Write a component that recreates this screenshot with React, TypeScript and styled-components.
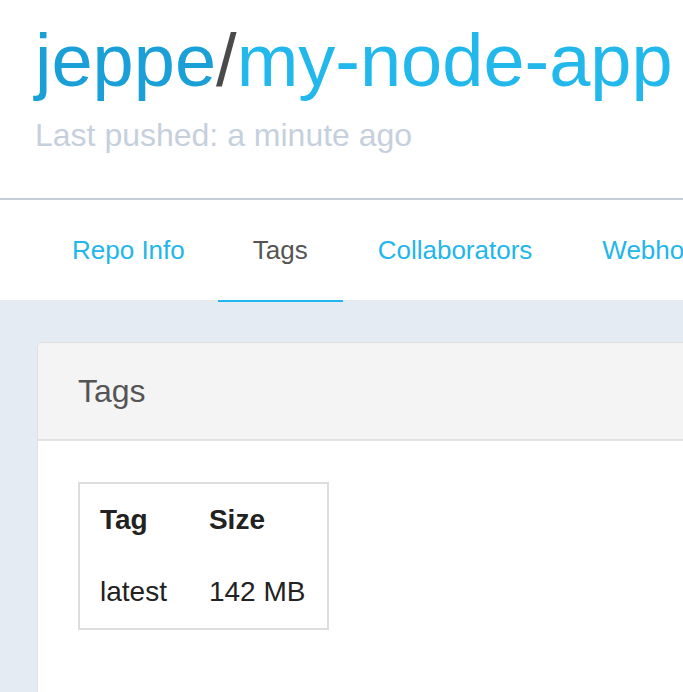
import React from 'react';
import styled, { createGlobalStyle } from "styled-components";

const GlobalStyle = createGlobalStyle`
    html, body {
        margin: 0;
        padding: 0;
        background: #ffffff;
        overflow: hidden;
        font-family: "Liberation Sans", Arial, sans-serif;
    }
`

type TabItem = {
    label: string
    active?: boolean
}

const tabs: TabItem[] = [
    {label: "Repo Info"},
    {label: "Tags", active: true},
    {label: "Collaborators"},
    {label: "Webhooks"},
    {label: "Settings"},
]

const rows = [
    {tag: "latest", size: "142 MB"},
]

export default function App() {
    return (
        <>
            <GlobalStyle/>
            <Header>
                <Title>
                    <Owner>jeppe</Owner>
                    <Slash>/</Slash>
                    <RepoName>my-node-app</RepoName>
                </Title>
                <Subtitle>Last pushed: a minute ago</Subtitle>
            </Header>
            <TabBar>
                {tabs.map(t => (
                    <Tab key={t.label} $active={t.active}>{t.label}</Tab>
                ))}
            </TabBar>
            <Main>
                <Card>
                    <CardHeader>Tags</CardHeader>
                    <CardBody>
                        <TagTable>
                            <thead>
                            <tr>
                                <Th>Tag</Th>
                                <Th>Size</Th>
                            </tr>
                            </thead>
                            <tbody>
                            {rows.map(r => (
                                <tr key={r.tag}>
                                    <Td>{r.tag}</Td>
                                    <Td>{r.size}</Td>
                                </tr>
                            ))}
                            </tbody>
                        </TagTable>
                    </CardBody>
                </Card>
            </Main>
        </>
    );
}

const Header = styled.header`
    padding: 21px 34px 43px 35px;
    border-bottom: 2px solid #c3ced8;
    white-space: nowrap;
`
const Title = styled.h1`
    margin: 0;
    font-size: 74px;
    font-weight: normal;
    line-height: 80px;
`
const Owner = styled.span`
    color: #1aa0d6;
`
const Slash = styled.span`
    color: #4a4a4a;
`
const RepoName = styled.span`
    color: #22b8ec;
`
const Subtitle = styled.p`
    margin: 14px 0 0;
    font-size: 32px;
    line-height: 40px;
    color: #c6d0dd;
`
const TabBar = styled.nav`
    display: flex;
    height: 100px;
    padding-left: 38px;
    background: #ffffff;
    white-space: nowrap;
`
const Tab = styled.a<{ $active?: boolean }>`
    position: relative;
    display: flex;
    align-items: center;
    padding: 0 35px;
    font-size: 26px;
    color: ${p => p.$active ? "#555555" : "#22b6ea"};
    text-decoration: none;
    cursor: pointer;

    &:first-child {
        padding-left: 34px;
        padding-right: 33px;
    }

    &::after {
        content: "";
        display: ${p => p.$active ? "block" : "none"};
        position: absolute;
        left: 0;
        right: 0;
        bottom: -2px;
        height: 2px;
        background: #22b8ee;
    }
`
const Main = styled.main`
    background: #e4ebf3;
    padding: 42px 0 0 37px;
    height: 400px;
`
const Card = styled.section`
    margin-right: -40px;
    height: 500px;
    background: #ffffff;
    border: 1px solid #e0e0e0;
    border-radius: 6px;
    overflow: hidden;
`
const CardHeader = styled.div`
    display: flex;
    align-items: center;
    height: 96px;
    padding: 0 40px;
    background: #f4f4f4;
    border-bottom: 2px solid #e2e2e2;
    font-size: 32px;
    color: #555555;
`
const CardBody = styled.div`
    padding: 41px 40px;
`
const TagTable = styled.table`
    border: 2px solid #dddddd;
    border-collapse: collapse;
    font-size: 28px;
    color: #222222;
`
const Th = styled.th`
    padding: 16px 22px 16px 20px;
    line-height: 40px;
    text-align: left;
    font-weight: bold;
`
const Td = styled.td`
    padding: 16px 22px 16px 20px;
    line-height: 40px;
`
